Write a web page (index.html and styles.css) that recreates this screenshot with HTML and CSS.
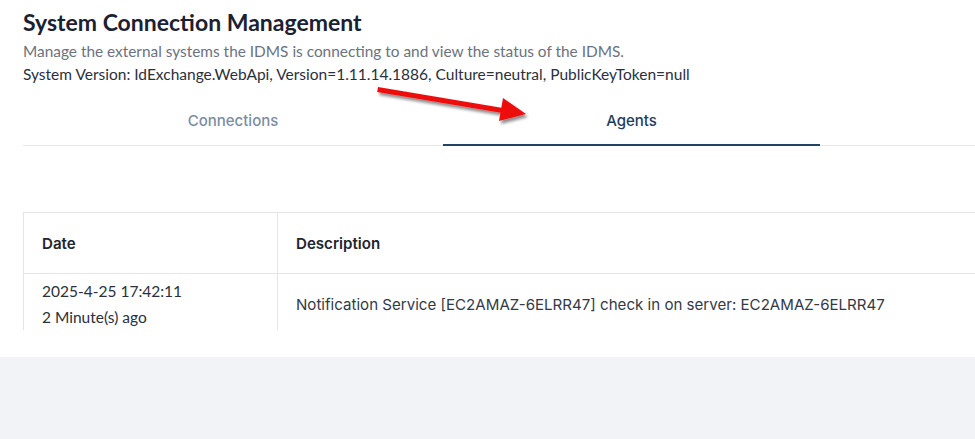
FILE: index.html
```html
<!DOCTYPE html>
<html lang="en">

<head>
    <meta charset="UTF-8">
    <meta name="viewport" content="width=device-width, initial-scale=1.0">
    <title>System Connection Management</title>
    <link rel="stylesheet" href="styles.css">
</head>

<body>
    <div class="page">
        <!-- Page header -->
        <div class="header">
            <h1>System Connection Management</h1>
            <p class="lead">Manage the external systems the IDMS is connecting to and view the status of the IDMS.</p>
            <p class="version">System Version: IdExchange.WebApi, Version=1.11.14.1886, Culture=neutral, PublicKeyToken=null</p>
        </div>

        <!-- Tabs -->
        <div class="tabs">
            <div class="tab tab-connections">Connections</div>
            <div class="tab tab-agents active">Agents</div>
        </div>

        <!-- Agent check-ins -->
        <div class="table-wrap">
            <table class="log">
                <thead>
                    <tr>
                        <th class="col-date">Date</th>
                        <th>Description</th>
                    </tr>
                </thead>
                <tbody>
                    <tr>
                        <td class="col-date">
                            <div class="when">2025-4-25 17:42:11</div>
                            <div class="when">2 Minute(s) ago</div>
                        </td>
                        <td>Notification Service [EC2AMAZ-6ELRR47] check in on server: EC2AMAZ-6ELRR47</td>
                    </tr>
                </tbody>
            </table>
        </div>

        <div class="spacer"></div>
        <div class="footer"></div>

        <!-- red callout arrow pointing at the Agents tab -->
        <svg class="callout" width="170" height="50" viewBox="0 0 170 50">
            <defs>
                <filter id="shadow" x="-20%" y="-50%" width="140%" height="200%">
                    <feDropShadow dx="2" dy="3" stdDeviation="1.6" flood-color="#000" flood-opacity="0.45" />
                </filter>
            </defs>
            <g filter="url(#shadow)" fill="#ee1111">
                <path d="M8 8 L136 29.5 L135.2 34.4 L7.2 12.9 Z" />
                <path d="M133 19 L156 35 L129 42 Z" />
            </g>
        </svg>
    </div>
</body>

</html>
```

FILE: styles.css
```css
html,
body {
    margin: 0;
    padding: 0;
    background-color: #ffffff;
    overflow: hidden;
}

.page {
    position: relative;
    width: 1010px;
    font-family: Lato, "Noto Sans", sans-serif;
}

.header {
    padding: 7px 0 0 23px;
}

h1 {
    margin: 0;
    font-size: 23px;
    line-height: 30px;
    font-weight: 700;
    color: #1b2130;
}

.lead,
.version {
    margin: 0;
    line-height: 23px;
}

.lead {
    margin-top: 3px;
    font-size: 15.4px;
    color: #6b7280;
}

.version {
    font-size: 15.5px;
    color: #2b303b;
}

.tabs {
    display: flex;
    margin: 10px 0 0 23px;
    border-bottom: 1px solid #e6e8ee;
    font-family: Inter, "Liberation Sans", sans-serif;
}

.tab {
    height: 48px;
    line-height: 50px;
    text-align: center;
    font-size: 15px;
    font-weight: 500;
    color: #7d8ca3;
}

.tab-connections {
    width: 420px;
}

.tab-agents {
    width: 377px;
}

.tab.active {
    color: #1d3d5e;
    border-bottom: 2px solid #1f4468;
    margin-bottom: -1px;
}

.table-wrap {
    margin: 66px 0 0 23px;
    height: 118px;
    overflow: hidden;
}

.log {
    width: 100%;
    border-collapse: collapse;
    font-family: Inter, "Liberation Sans", sans-serif;
    font-size: 15.1px;
    color: #333a47;
}

.log th,
.log td {
    border: 1px solid #e3e5ea;
    text-align: left;
    padding: 0 17px 0 18px;
}

.log th {
    height: 60px;
    font-weight: 600;
    color: #1e2430;
}

.log td {
    padding-top: 4px;
    padding-bottom: 4px;
}

.col-date {
    width: 218px;
}

.when {
    font-family: Lato, "Noto Sans", sans-serif;
    font-size: 15.5px;
    line-height: 26px;
    color: #2b303b;
}

.spacer {
    height: 27px;
}

.footer {
    height: 100px;
    background-color: #f1f3f7;
}

.callout {
    position: absolute;
    left: 370px;
    top: 79px;
}
```
